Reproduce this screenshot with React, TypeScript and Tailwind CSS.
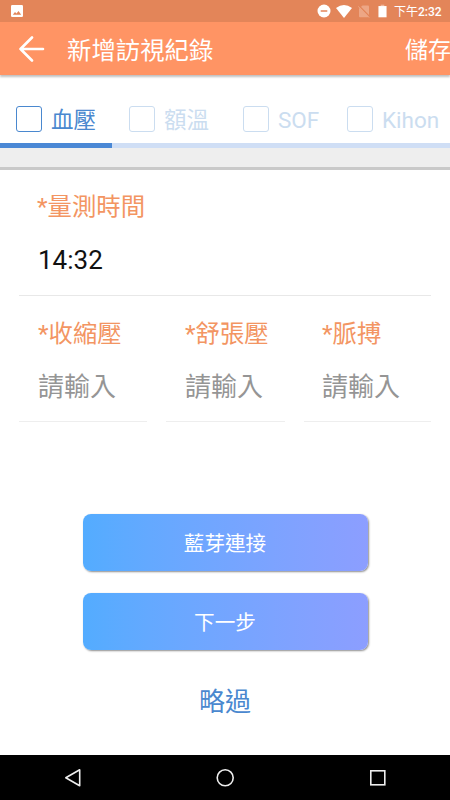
import clsx from "clsx";

const tabs = [
  { label: "血壓", className: "w-[112px] pl-4", active: true },
  { label: "額溫", className: "w-[115px] pl-[17px]", active: false },
  { label: "SOF", className: "w-[104px] pl-4", active: false },
  { label: "Kihon", className: "w-[119px] pl-4", active: false },
];

const fields = [
  { label: "收縮壓", className: "w-32 pl-[19px]" },
  { label: "舒張壓", className: "w-[119px] pl-[19px]" },
  { label: "脈搏", className: "w-[127px] pl-[18px]" },
];

function StatusBar() {
  return (
    <div className="flex h-[22px] items-center bg-[#e38559] pl-[11px] pr-2 text-white">
      <svg viewBox="0 0 12 12" className="h-3 w-3" aria-hidden>
        <rect width="12" height="12" rx="1.2" fill="currentColor" />
        <path d="M1.8 9.8 L4 7 L5.5 8.6 L7.5 6 L10.2 9.8 Z" fill="#e38559" />
      </svg>
      <svg viewBox="0 0 14 14" className="ml-[294px] h-[14px] w-[14px]" aria-hidden>
        <circle cx="7" cy="7" r="6.5" fill="currentColor" />
        <path d="M3.7 7 H10.3" stroke="#e38559" strokeWidth="1.5" />
      </svg>
      <svg viewBox="0 0 16 13" className="ml-[5px] h-[13px] w-4" aria-hidden>
        <path d="M0 3 Q8 -3 16 3 L8 13 Z" fill="currentColor" />
      </svg>
      <svg viewBox="0 0 12 13" className="ml-[6px] h-[13px] w-3 text-[#eda685]" aria-hidden>
        <path d="M4.5 0.5 H10 Q11 0.5 11 1.5 V11.5 L9.5 12.3 H2 Q1 12.3 1 11.3 V3.8 Z" fill="currentColor" />
        <path d="M1 0.6 L12 12" stroke="#e38559" strokeWidth="1.3" />
        <path d="M0.2 1.3 L11.2 12.7" stroke="currentColor" strokeWidth="1" />
      </svg>
      <svg viewBox="0 0 10 14" className="ml-2 h-[14px] w-[9px]" aria-hidden>
        <path d="M3 0 H7 V1.5 H3 Z" fill="#f0b79c" />
        <path d="M0.5 1.5 H9.5 V14 H0.5 Z" fill="currentColor" />
      </svg>
      <span className="ml-[7px] whitespace-nowrap pt-px text-[12px] leading-[22px]">
        下午<span className="font-medium">2:32</span>
      </span>
    </div>
  );
}

function Header() {
  return (
    <header className="flex h-[53px] items-center overflow-hidden whitespace-nowrap bg-[#ff9464] text-[24.4px] leading-[53px] text-white">
      <svg
        viewBox="0 0 26 26"
        fill="none"
        stroke="currentColor"
        strokeWidth="2.6"
        strokeLinecap="round"
        strokeLinejoin="round"
        className="ml-[19px] h-[26px] w-[26px] shrink-0"
        aria-hidden
      >
        <path d="M24 13 H1.5 M13 1.5 L1.5 13 L13 24.5" />
      </svg>
      <h1 className="ml-[22px] w-[338px] shrink-0 pt-[3px]">新增訪視紀錄</h1>
      <button className="shrink-0 pt-[3px] text-[23px]">儲存</button>
    </header>
  );
}

function Tab({ label, className, active }: (typeof tabs)[number]) {
  return (
    <button
      className={clsx(
        "flex h-[73px] shrink-0 items-center border-b-[5px] pt-[19px] text-[22.5px]",
        active ? "border-[#4a88d5] text-[#4a88cf]" : "border-[#cfdef5] text-[#cbddf0]",
        className,
      )}
    >
      <span className="h-[26px] w-[26px] rounded-[3px] border border-current" />
      <span className="ml-[9px] pt-0.5 leading-[26px]">{label}</span>
    </button>
  );
}

function GradientButton({ children }: { children: string }) {
  return (
    <button className="h-[57px] w-[285px] rounded-lg bg-linear-to-r from-[#53acff] to-[#8c9eff] pt-[3px] text-[20.6px] text-white shadow-[1px_1px_2px_rgba(0,0,0,0.45)]">
      {children}
    </button>
  );
}

function NavBar() {
  return (
    <nav className="flex h-[45px] items-center bg-black text-[#eeeeee]">
      <svg viewBox="0 0 450 45" fill="none" stroke="currentColor" strokeWidth="1.6" className="h-[45px] w-full" aria-hidden>
        <path d="M65.8 22.8 L79.7 14.8 V30.8 Z" strokeLinejoin="round" />
        <circle cx="225.2" cy="22.8" r="8" />
        <rect x="370.8" y="15.8" width="14" height="14" />
      </svg>
    </nav>
  );
}

export default function App() {
  return (
    <main className="flex h-[800px] w-[450px] flex-col overflow-hidden bg-white font-[Roboto,'Noto_Sans_CJK_TC',sans-serif]">
      <StatusBar />
      <div className="shadow-[0_2px_2px_rgba(0,0,0,0.25)]">
        <Header />
      </div>
      <div className="flex">
        {tabs.map((tab) => (
          <Tab key={tab.label} {...tab} />
        ))}
      </div>
      <div className="h-[22px] shrink-0 border-b-[3px] border-[#c9c9c9] bg-[#eeeeee]" />

      <section className="mx-[19px] h-[126px] shrink-0 border-b border-[#e8e8e8] pl-[18px] pt-[19px]">
        <p className="text-[24.4px] leading-9 text-[#f39562]">*量測時間</p>
        <p className="mt-[17px] pl-px text-[26px] leading-9 text-[#111111]">14:32</p>
      </section>

      <section className="mx-[19px] flex justify-between">
        {fields.map((field) => (
          <div
            key={field.label}
            className={clsx("h-[126px] whitespace-nowrap border-b border-[#eeeeee] pt-5", field.className)}
          >
            <p className="text-[24.4px] leading-9 text-[#f39562]">*{field.label}</p>
            <p className="mt-[17px] text-[26px] leading-9 text-[#959595]">請輸入</p>
          </div>
        ))}
      </section>

      <div className="mt-[92px] flex flex-col items-center gap-[22px]">
        <GradientButton>藍芽連接</GradientButton>
        <GradientButton>下一步</GradientButton>
        <button className="mt-[10px] text-[26px] leading-10 text-[#4a88cf]">略過</button>
      </div>

      <div className="mt-auto">
        <NavBar />
      </div>
    </main>
  );
}
